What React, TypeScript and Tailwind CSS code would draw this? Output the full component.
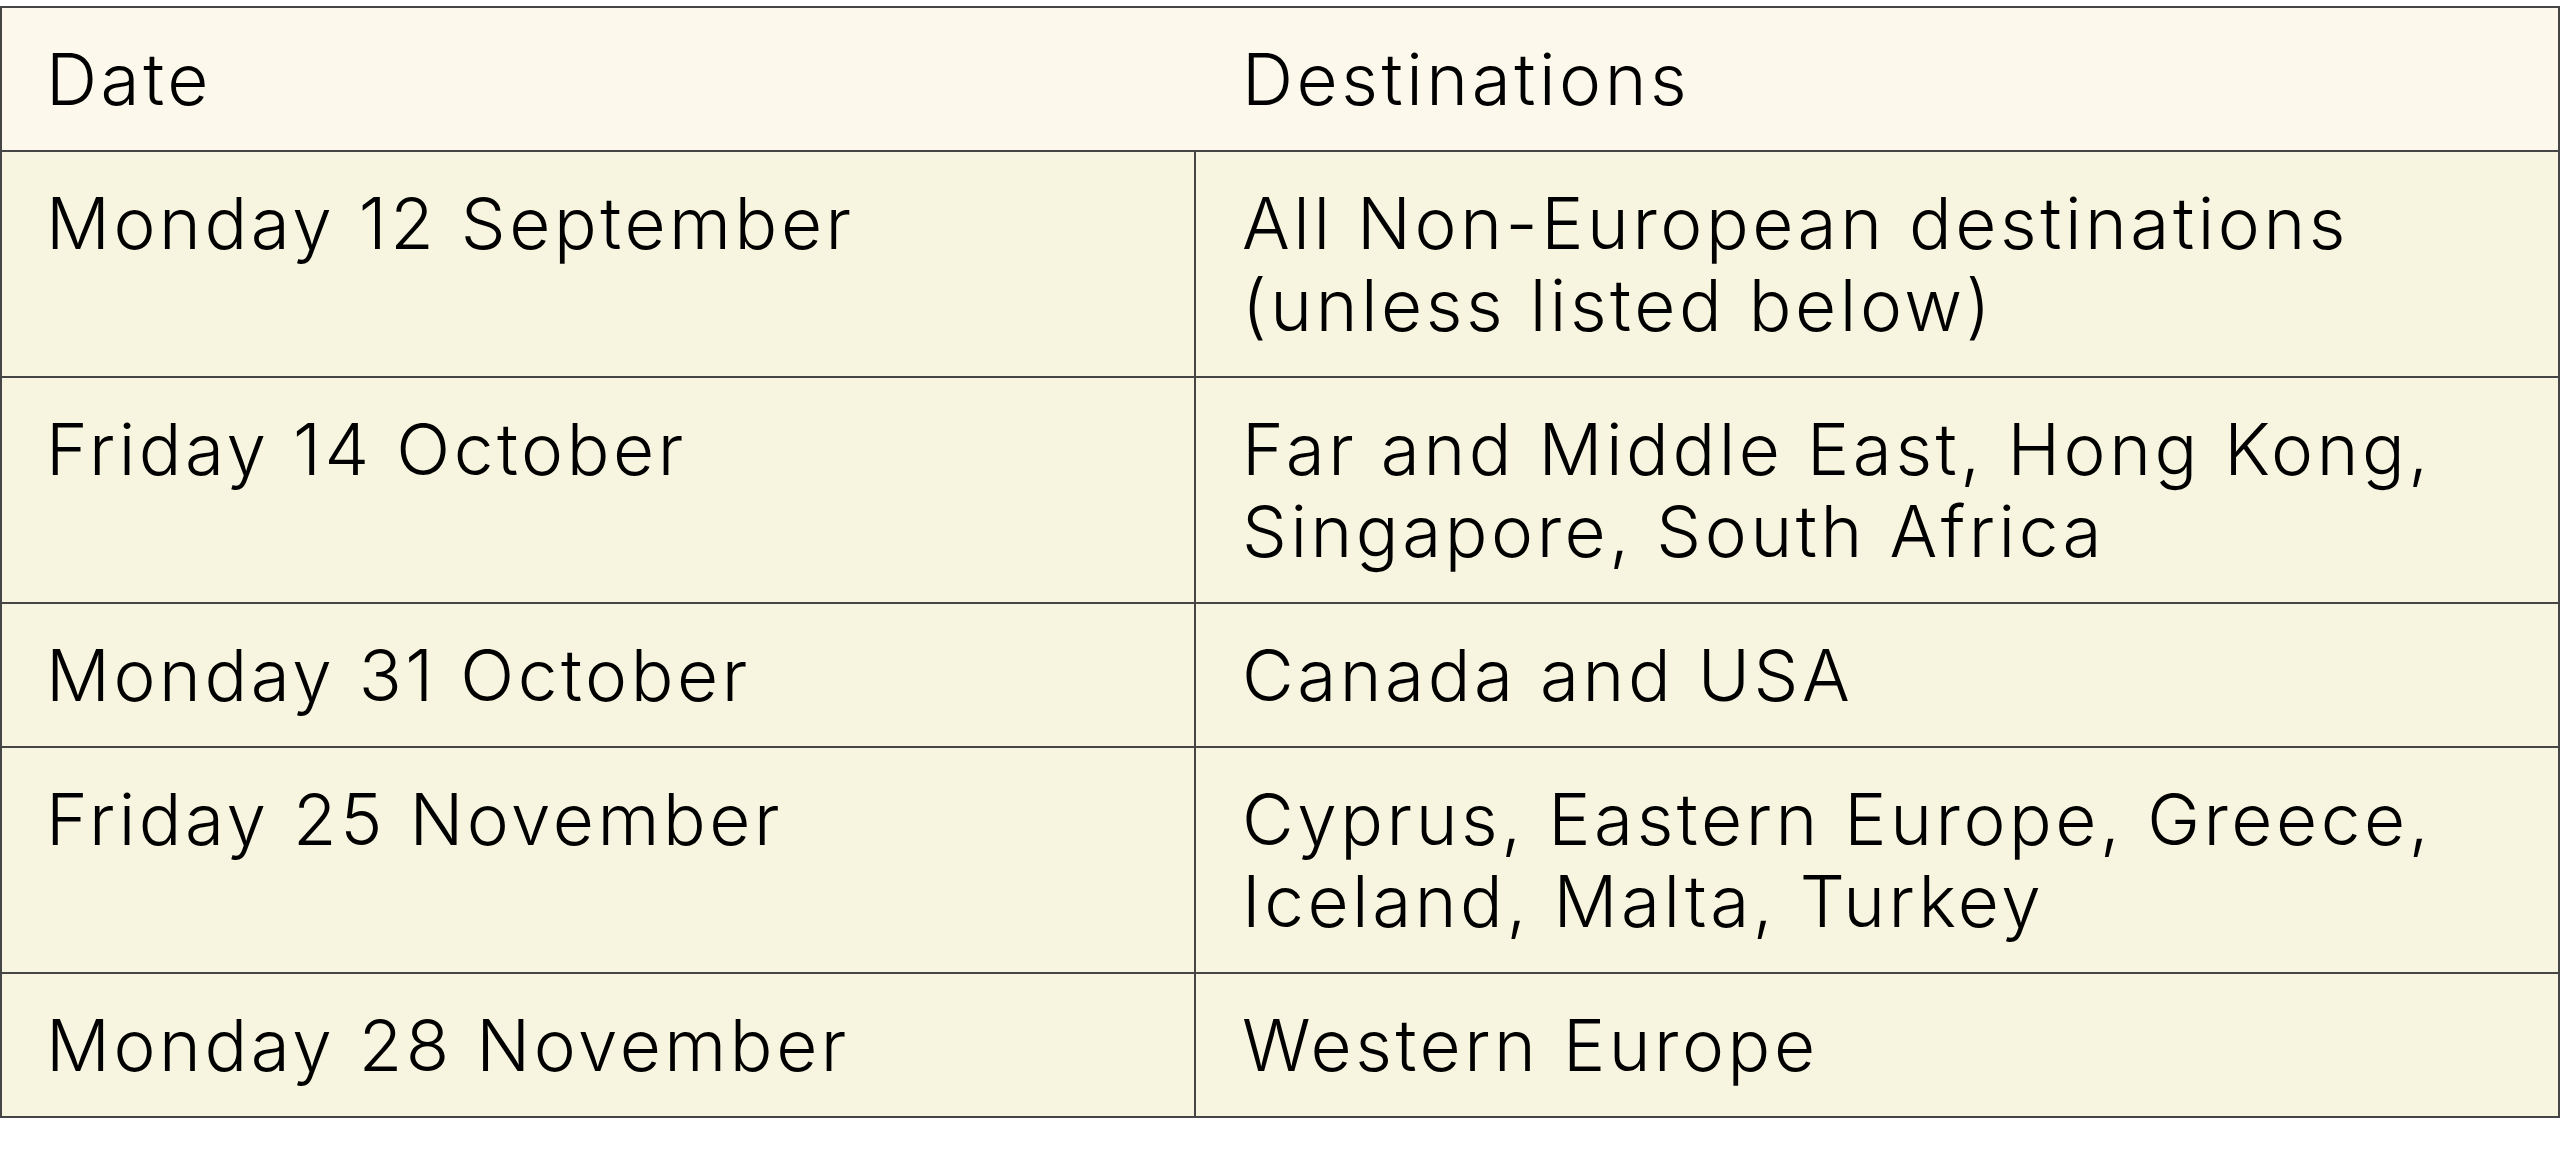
const rows = [
  { date: "Monday 12 September", dest: ["All Non-European destinations", "(unless listed below)"] },
  { date: "Friday 14 October", dest: ["Far and Middle East, Hong Kong,", "Singapore, South Africa"] },
  { date: "Monday 31 October", dest: ["Canada and USA"] },
  { date: "Friday 25 November", dest: ["Cyprus, Eastern Europe, Greece,", "Iceland, Malta, Turkey"] },
  { date: "Monday 28 November", dest: ["Western Europe"] },
]

export default function App() {
  return (
    <div className="min-h-screen bg-white pt-[6px] text-black" style={{ fontFamily: "Inter, 'Noto Sans', sans-serif" }}>
      <div className="border-2 border-[#454545] text-[71px] font-light leading-[82px] tracking-[0.05em]">
        <div className="grid grid-cols-[1194px_1fr] border-b-2 border-[#454545] bg-[#fcf9ec]">
          <div className="border-r-2 border-transparent py-[30px] pl-[44px]">Date</div>
          <div className="py-[30px] pl-[46px]">Destinations</div>
        </div>
        {rows.map((row, i) => (
          <div
            key={row.date}
            className={
              "grid grid-cols-[1194px_1fr] bg-[#f7f4df] " +
              (i < rows.length - 1 ? "border-b-2 border-[#454545]" : "")
            }
          >
            <div className="border-r-2 border-[#454545] py-[30px] pl-[44px]">{row.date}</div>
            <div className="py-[30px] pl-[46px]">
              {row.dest.map((line) => (
                <div key={line}>{line}</div>
              ))}
            </div>
          </div>
        ))}
      </div>
    </div>
  )
}
